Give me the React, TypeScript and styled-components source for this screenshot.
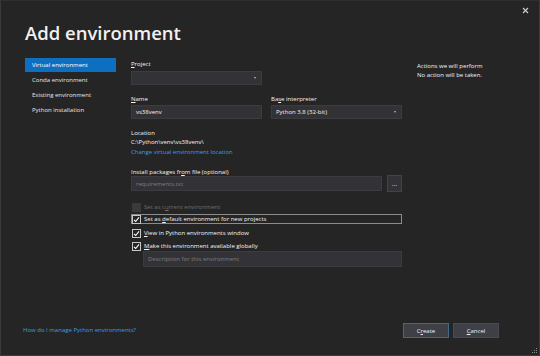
import styled, { createGlobalStyle } from 'styled-components'

const GlobalStyle = createGlobalStyle`
  html, body {
    margin: 0;
    padding: 0;
    background: #252526;
  }
  body {
    font-family: "Open Sans", "Noto Sans", sans-serif;
  }
`

const Dialog = styled.div`
  width: 540px;
  height: 356px;
  box-sizing: border-box;
  background: #252526;
  border: 1px solid #3a3a3c;
  border-top-color: #2f2f31;
  display: flex;
  flex-direction: column;
  position: relative;
  color: #f4f4f4;
  font-size: 6px;
  font-weight: 500;
  overflow: hidden;
`

const CloseButton = styled.div`
  position: absolute;
  top: 5px;
  right: 9px;
  width: 9px;
  height: 9px;
  display: flex;
  align-items: center;
  justify-content: center;
`

const Title = styled.h1`
  margin: 0;
  padding: 18px 0 0 24px;
  height: 40px;
  font-size: 18.5px;
  line-height: 28px;
  font-weight: 600;
  color: #f1f1f1;
`

const Body = styled.div`
  display: flex;
  gap: 15px;
  padding-left: 24px;
`

const Sidebar = styled.div`
  width: 91px;
  margin-top: -1px;
  display: flex;
  flex-direction: column;
  gap: 1px;
`

const NavItem = styled.div<{ $active?: boolean }>`
  height: 14px;
  line-height: 14px;
  padding-left: 7px;
  background: ${p => (p.$active ? '#0e6fc0' : 'transparent')};
  color: ${p => (p.$active ? '#ffffff' : '#e6e6e6')};
`

const Main = styled.div`
  width: 271px;
  display: flex;
  flex-direction: column;
`

const Label = styled.div<{ $top?: number }>`
  height: 9px;
  line-height: 9px;
  margin-top: ${p => p.$top ?? 0}px;
  white-space: nowrap;
`

const Key = styled.span`
  text-decoration: underline;
  text-underline-offset: 1px;
`

const Field = styled.div<{ $h?: number; $top?: number; $muted?: boolean; $w?: number }>`
  height: ${p => p.$h ?? 14}px;
  width: ${p => (p.$w ? `${p.$w}px` : 'auto')};
  margin-top: ${p => p.$top ?? 0}px;
  box-sizing: border-box;
  background: #333337;
  border: 1px solid #3b3b40;
  display: flex;
  align-items: center;
  justify-content: space-between;
  padding: 0 4px 0 4px;
  color: ${p => (p.$muted ? '#7d7d80' : '#f1f1f1')};
  white-space: nowrap;
`

const Caret = styled.span`
  width: 0;
  height: 0;
  border-left: 1.5px solid transparent;
  border-right: 1.5px solid transparent;
  border-top: 2px solid #bdbdbd;
  margin-right: 1px;
`

const Row = styled.div<{ $gap?: number }>`
  display: flex;
  gap: ${p => p.$gap ?? 9}px;
`

const Column = styled.div`
  flex: 1;
  display: flex;
  flex-direction: column;
`

const Link = styled.div<{ $top?: number }>`
  height: 9px;
  line-height: 9px;
  margin-top: ${p => p.$top ?? 0}px;
  color: #3c9ee0;
  white-space: nowrap;
`

const FileRow = styled.div`
  display: flex;
  align-items: center;
  gap: 5px;
  height: 17px;
  margin-top: -2px;
`

const BrowseButton = styled.div`
  width: 15px;
  height: 17px;
  box-sizing: border-box;
  background: #333337;
  border: 1px solid #434346;
  display: flex;
  align-items: center;
  justify-content: center;
  color: #c8c8c8;
  font-size: 7px;
  line-height: 1;
`

const CheckRow = styled.div<{ $top?: number; $focus?: boolean; $disabled?: boolean }>`
  height: ${p => (p.$focus ? 10 : 12)}px;
  margin-top: ${p => p.$top ?? 0}px;
  box-sizing: border-box;
  display: flex;
  align-items: center;
  gap: 3px;
  border: 1px solid ${p => (p.$focus ? '#8c8c8c' : 'transparent')};
  border-left-width: ${p => (p.$focus ? 1 : 0)}px;
  padding-left: ${p => (p.$focus ? 0 : 1)}px;
  color: ${p => (p.$disabled ? '#6e6e70' : '#f4f4f4')};
  white-space: nowrap;
`

const Box = styled.span<{ $disabled?: boolean }>`
  width: 9px;
  height: 9px;
  box-sizing: border-box;
  flex: none;
  border: 1px solid ${p => (p.$disabled ? '#3a3a3c' : '#c8c8c8')};
  background: ${p => (p.$disabled ? '#3a3a3c' : '#252526')};
  display: flex;
  align-items: center;
  justify-content: center;
`

const Description = styled(Field)`
  margin-left: 12px;
`

const Aside = styled.div`
  padding-top: 3px;
  display: flex;
  flex-direction: column;
  line-height: 9px;
`

const Footer = styled.div`
  margin-top: auto;
  height: 15px;
  padding: 0 40px 17px 22px;
  display: flex;
  align-items: center;
  justify-content: space-between;
`

const Buttons = styled.div`
  display: flex;
  gap: 4px;
`

const Button = styled.div<{ $primary?: boolean }>`
  width: 46px;
  height: 15px;
  box-sizing: border-box;
  background: #3f3f46;
  border: 1px solid ${p => (p.$primary ? '#3e6a8c' : '#4a4a50')};
  display: flex;
  align-items: center;
  justify-content: center;
  color: #f1f1f1;
`

const Grip = styled.svg`
  position: absolute;
  right: 1px;
  bottom: 1px;
`

function Check () {
  return (
    <svg width='7' height='7' viewBox='0 0 7 7'>
      <path d='M1 3.8 L2.7 5.5 L6 1.3' fill='none' stroke='#ffffff' strokeWidth='1.1' />
    </svg>
  )
}

export default function App () {
  return (
    <>
      <GlobalStyle />
      <Dialog>
        <CloseButton>
          <svg width='7' height='7' viewBox='0 0 7 7'>
            <path d='M1 1 L6 6 M6 1 L1 6' stroke='#d0d0d0' strokeWidth='1.1' />
          </svg>
        </CloseButton>
        <Title>Add environment</Title>
        <Body>
          <Sidebar>
            <NavItem $active>Virtual environment</NavItem>
            <NavItem>Conda environment</NavItem>
            <NavItem>Existing environment</NavItem>
            <NavItem>Python installation</NavItem>
          </Sidebar>
          <Main>
            <Label $top={1}><Key>P</Key>roject</Label>
            <Field $top={2} $w={131}>
              <span />
              <Caret />
            </Field>
            <Row>
              <Column>
                <Label $top={10}><Key>N</Key>ame</Label>
                <Field $top={1}>vs38venv</Field>
              </Column>
              <Column>
                <Label $top={10}>Ba<Key>s</Key>e interpreter</Label>
                <Field $top={1}>
                  <span>Python 3.8 (32-bit)</span>
                  <Caret />
                </Field>
              </Column>
            </Row>
            <Label $top={10}>Location</Label>
            <Label>C:\Python\venv\vs38venv\</Label>
            <Link $top={1}>Change virtual environment location</Link>
            <Label $top={11}>Install packages fr<Key>o</Key>m file (optional)</Label>
            <FileRow>
              <Field $h={15} $muted style={{ flex: 1 }}>requirements.txt</Field>
              <BrowseButton>…</BrowseButton>
            </FileRow>
            <CheckRow $top={9} $disabled>
              <Box $disabled />
              <span>Set as c<Key>u</Key>rrent environment</span>
            </CheckRow>
            <CheckRow $top={1} $focus>
              <Box><Check /></Box>
              <span>Set as <Key>d</Key>efault environment for new projects</span>
            </CheckRow>
            <CheckRow $top={3}>
              <Box><Check /></Box>
              <span><Key>V</Key>iew in Python environments window</span>
            </CheckRow>
            <CheckRow $top={1}>
              <Box><Check /></Box>
              <span><Key>M</Key>ake this environment available globally</span>
            </CheckRow>
            <Description $h={16} $top={-1} $muted>Description for this environment</Description>
          </Main>
          <Aside>
            <span>Actions we will perform</span>
            <span>No action will be taken.</span>
          </Aside>
        </Body>
        <Footer>
          <Link>How do I manage Python environments?</Link>
          <Buttons>
            <Button $primary>C<Key>r</Key>eate</Button>
            <Button><Key>C</Key>ancel</Button>
          </Buttons>
        </Footer>
        <Grip width='6' height='6' viewBox='0 0 6 6'>
          <rect x='4' y='0' width='1' height='1' fill='#8a8a8a' />
          <rect x='2' y='2' width='1' height='1' fill='#8a8a8a' />
          <rect x='4' y='2' width='1' height='1' fill='#8a8a8a' />
          <rect x='0' y='4' width='1' height='1' fill='#8a8a8a' />
          <rect x='2' y='4' width='1' height='1' fill='#8a8a8a' />
          <rect x='4' y='4' width='1' height='1' fill='#8a8a8a' />
        </Grip>
      </Dialog>
    </>
  )
}
